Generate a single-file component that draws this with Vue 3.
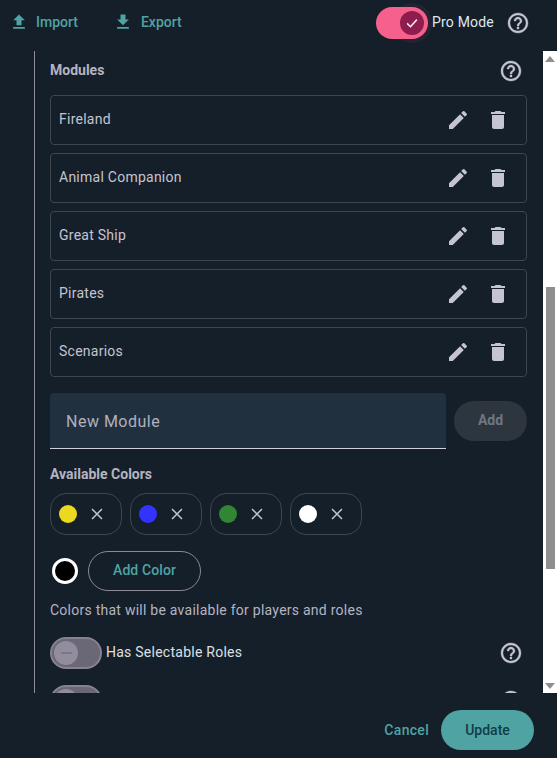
<script setup>
const modules = ['Fireland', 'Animal Companion', 'Great Ship', 'Pirates', 'Scenarios']
const colors = ['#ecd81e', '#3333ff', '#328532', '#ffffff']
const helpPath = 'M11 18h2v-2h-2v2zm1-16C6.48 2 2 6.48 2 12s4.48 10 10 10 10-4.48 10-10S17.52 2 12 2zm0 18c-4.41 0-8-3.59-8-8s3.59-8 8-8 8 3.59 8 8-3.59 8-8 8zm0-14c-2.21 0-4 1.79-4 4h2c0-1.1.9-2 2-2s2 .9 2 2c0 2-3 1.75-3 5h2c0-2.25 3-2.5 3-5 0-2.21-1.79-4-4-4z'
</script>

<template>
  <div class="page">
    <header class="top">
      <div class="actions">
        <button class="link">
          <svg class="tool-icon" viewBox="0 0 24 24"><path d="M9 16h6v-6h4l-7-7-7 7h4v6zm-4 2h14v2H5v-2z" /></svg>
          Import
        </button>
        <button class="link">
          <svg class="tool-icon" viewBox="0 0 24 24"><path d="M19 9h-4V3H9v6H5l7 7 7-7zM5 18v2h14v-2H5z" /></svg>
          Export
        </button>
      </div>
      <div class="pro">
        <div class="switch on">
          <span class="halo"></span>
          <span class="knob">
            <svg viewBox="0 0 24 24"><path d="M5.5 12.5l4.5 4.5 8.5-9.5" /></svg>
          </span>
        </div>
        <span class="pro-label">Pro Mode</span>
        <svg class="help big" viewBox="0 0 24 24"><path :d="helpPath" /></svg>
      </div>
    </header>

    <div class="middle">
      <main class="scroll">
        <div class="content">
          <div class="heading">
            <h2>Modules</h2>
            <svg class="help" viewBox="0 0 24 24"><path :d="helpPath" /></svg>
          </div>

          <ul class="rows">
            <li v-for="m in modules" :key="m" class="row">
              <span>{{ m }}</span>
              <svg class="row-icon" viewBox="0 0 24 24"><path d="M3 17.25V21h3.75L17.81 9.94l-3.75-3.75L3 17.25zM20.71 7.04a1 1 0 0 0 0-1.41l-2.34-2.34a1 1 0 0 0-1.41 0l-1.83 1.83 3.75 3.75 1.83-1.83z" /></svg>
              <svg class="row-icon trash" viewBox="0 0 24 24"><path d="M6 19c0 1.1.9 2 2 2h8c1.1 0 2-.9 2-2V7H6v12zM19 4h-3.5l-1-1h-5l-1 1H5v2h14V4z" /></svg>
            </li>
          </ul>

          <div class="new-row">
            <div class="field">New Module</div>
            <button class="add">Add</button>
          </div>

          <h3>Available Colors</h3>
          <div class="chips">
            <div v-for="c in colors" :key="c" class="chip">
              <span class="dot" :style="{ background: c }"></span>
              <svg class="x" viewBox="0 0 12 12"><path d="M1 1l10 10M11 1L1 11" /></svg>
            </div>
          </div>

          <div class="picker">
            <span class="swatch"></span>
            <button class="outline">Add Color</button>
          </div>
          <p class="hint">Colors that will be available for players and roles</p>

          <div class="toggle-row">
            <div class="switch off"><span class="knob"><i></i></span></div>
            <span class="toggle-label">Has Selectable Roles</span>
            <svg class="help" viewBox="0 0 24 24"><path :d="helpPath" /></svg>
          </div>
          <div class="toggle-row">
            <div class="switch off"><span class="knob"><i></i></span></div>
            <span class="toggle-label"></span>
            <svg class="help" viewBox="0 0 24 24"><path :d="helpPath" /></svg>
          </div>
        </div>
      </main>
      <aside class="bar">
        <span class="arrow up"></span>
        <span class="track"><span class="thumb"></span></span>
        <span class="arrow down"></span>
      </aside>
    </div>

    <footer class="bottom">
      <button class="cancel">Cancel</button>
      <button class="update">Update</button>
    </footer>
  </div>
</template>

<style scoped>
.page {
  width: 557px;
  height: 758px;
  background: #151f29;
  display: flex;
  flex-direction: column;
  overflow: hidden;
  isolation: isolate;
  font-family: Roboto, "Liberation Sans", sans-serif;
  font-size: 14px;
  color: #c4c4d2;
}
button {
  font: inherit;
  border: 0;
  background: none;
  padding: 0;
}
.top {
  height: 51px;
  flex: none;
  display: flex;
  align-items: flex-start;
  justify-content: space-between;
  padding: 7px 27px 0 9px;
  box-sizing: border-box;
}
.actions {
  display: flex;
  gap: 36px;
  padding-top: 5px;
}
.link {
  display: flex;
  align-items: center;
  gap: 7px;
  height: 20px;
  color: #4fa3a3;
  font-weight: 500;
  font-size: 14px;
}
.link + .link {
  margin-left: -1px;
  gap: 8px;
}
.tool-icon {
  width: 20px;
  height: 20px;
  fill: #4fa3a3;
}
.pro {
  display: flex;
  align-items: flex-start;
}
.switch {
  position: relative;
  width: 52px;
  height: 32px;
  flex: none;
  border-radius: 16px;
  box-sizing: border-box;
}
.switch.on {
  background: #f5608c;
}
.switch.off {
  background: #6a6776;
  border: 2px solid #86828f;
}
.knob {
  position: absolute;
  width: 24px;
  height: 24px;
  border-radius: 50%;
  display: flex;
  align-items: center;
  justify-content: center;
}
.on .knob {
  left: 24px;
  top: 4px;
  background: #8c1d4c;
}
.on .knob svg {
  width: 18px;
  height: 18px;
  fill: none;
  stroke: #fdeef3;
  stroke-width: 2;
}
.halo {
  position: absolute;
  z-index: -1;
  left: 16px;
  top: -4px;
  width: 40px;
  height: 40px;
  border-radius: 50%;
  background: #272231;
}
.off .knob {
  left: 2px;
  top: 2px;
  background: #918d9e;
}
.off .knob i {
  width: 11px;
  height: 2px;
  background: #7a7788;
}
.pro-label {
  margin: 7px 0 0 4px;
  font-size: 14px;
  line-height: 16px;
  color: #dfe8f0;
  letter-spacing: 0.2px;
}
.help {
  width: 24px;
  height: 24px;
  fill: #c4c4d2;
  stroke: #c4c4d2;
  stroke-width: 0.35;
  flex: none;
}
.help.big {
  margin: 4px 0 0 12px;
}
.middle {
  height: 642px;
  flex: none;
  display: flex;
  justify-content: space-between;
  overflow: hidden;
}
.scroll {
  width: 493px;
  margin-left: 34px;
  border-left: 1px solid #8f8f9c;
  overflow: hidden;
  box-sizing: content-box;
}
.content {
  padding: 0 0 0 15px;
  width: 477px;
}
.heading {
  display: flex;
  align-items: center;
  justify-content: space-between;
  height: 24px;
  margin-top: 8px;
  padding-right: 4px;
  width: 473px;
}
h2, h3 {
  margin: 0;
  font-family: Roboto, sans-serif;
  font-size: 14px;
  font-weight: 700;
  color: #b4b4c2;
  line-height: 20px;
}
h2 {
  padding-bottom: 2px;
}
.rows {
  list-style: none;
  margin: 12px 0 0;
  padding: 0;
  display: flex;
  flex-direction: column;
  gap: 8px;
}
.row {
  height: 50px;
  box-sizing: border-box;
  border: 1px solid #3e4650;
  border-radius: 4px;
  display: flex;
  align-items: center;
  padding: 0 16px 0 8px;
  gap: 16px;
  color: #c4c4d2;
  letter-spacing: 0.25px;
}
.row span {
  flex: 1;
  padding-bottom: 2px;
}
.row-icon {
  width: 24px;
  height: 24px;
  fill: #c4c4d2;
}
.new-row {
  display: flex;
  align-items: center;
  gap: 8px;
  margin-top: 16px;
}
.field {
  width: 396px;
  height: 56px;
  box-sizing: border-box;
  padding: 2px 16px 0;
  display: flex;
  align-items: center;
  background: #21303e;
  border-bottom: 1px solid #cfcfdf;
  border-radius: 4px 4px 0 0;
  font-size: 16px;
  letter-spacing: 0.5px;
  color: #b0b0be;
}
.add {
  width: 73px;
  height: 40px;
  padding-bottom: 2px;
  border-radius: 20px;
  background: #2d363f;
  color: #6f7682;
  font-weight: 700;
  font-size: 14px;
}
h3 {
  margin-top: 15px;
}
.chips {
  display: flex;
  gap: 8px;
  margin-top: 9px;
}
.chip {
  width: 72px;
  height: 42px;
  box-sizing: border-box;
  border: 1px solid #3e4650;
  border-radius: 16px;
  display: flex;
  align-items: center;
  padding-left: 8px;
  gap: 14px;
}
.dot {
  width: 18px;
  height: 18px;
  border-radius: 50%;
  flex: none;
}
.x {
  width: 12px;
  height: 12px;
  fill: none;
  stroke: #c4c4d2;
  stroke-width: 1.5;
}
.picker {
  display: flex;
  align-items: center;
  gap: 10px;
  margin-top: 16px;
  padding-left: 2px;
}
.swatch {
  width: 26px;
  height: 26px;
  box-sizing: border-box;
  border-radius: 50%;
  background: #000;
  border: 3px solid #fff;
}
.outline {
  width: 113px;
  height: 40px;
  box-sizing: border-box;
  padding-bottom: 2px;
  border: 1px solid #8a8a96;
  border-radius: 20px;
  color: #4fa3a3;
  font-weight: 500;
  font-size: 14px;
  letter-spacing: 0.1px;
}
.hint {
  margin: 9px 0 0;
  line-height: 20px;
  font-size: 14px;
  letter-spacing: 0.25px;
  color: #b4b4c2;
}
.toggle-row {
  display: flex;
  align-items: center;
  height: 32px;
  margin-top: 16px;
  padding-right: 4px;
}
.hint + .toggle-row {
  margin-top: 17px;
}
.toggle-label {
  flex: 1;
  margin-left: 4px;
  padding-bottom: 2px;
  color: #dde0e6;
  font-size: 14px;
  font-weight: 400;
  letter-spacing: 0.25px;
}
.bar {
  width: 14px;
  flex: none;
  background: #fff;
  display: flex;
  flex-direction: column;
  align-items: center;
}
.arrow {
  width: 0;
  height: 0;
  border-left: 5px solid transparent;
  border-right: 5px solid transparent;
  flex: none;
}
.arrow.up {
  margin: 5px 0 4px;
  border-bottom: 6px solid #8f8f8f;
}
.arrow.down {
  margin: 4px 0;
  border-top: 6px solid #8f8f8f;
}
.track {
  flex: 1;
  width: 100%;
  position: relative;
}
.thumb {
  position: absolute;
  left: 3px;
  right: 2px;
  top: 221px;
  height: 282px;
  background: #8f8f8f;
}
.bottom {
  flex: 1;
  display: flex;
  align-items: flex-start;
  justify-content: flex-end;
  gap: 12px;
  padding: 17px 23px 0 0;
}
.cancel {
  height: 40px;
  color: #4fa3a3;
  font-weight: 500;
  font-size: 14px;
  letter-spacing: 0.3px;
}
.update {
  width: 93px;
  height: 40px;
  border-radius: 20px;
  background: #4fa3a3;
  color: #113c48;
  font-weight: 500;
  font-size: 14px;
}
</style>
